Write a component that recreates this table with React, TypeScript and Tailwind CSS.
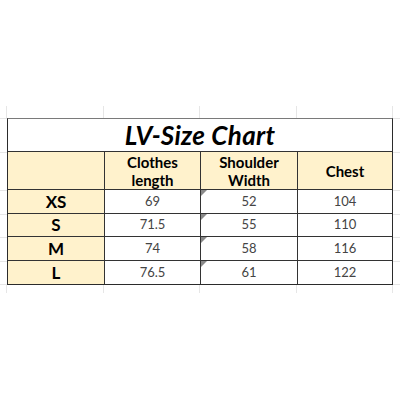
import React from "react";

const rows = [
  { s: "XS", a: "69", b: "52", c: "104", h: "h-[24px]" },
  { s: "S", a: "71.5", b: "55", c: "110", h: "h-[23px]" },
  { s: "M", a: "74", b: "58", c: "116", h: "h-[24px]" },
  { s: "L", a: "76.5", b: "61", c: "122", h: "h-[23px]" },
];

function Tri() {
  return (
    <svg className="absolute left-0 top-0" width="6" height="6" viewBox="0 0 6 6">
      <polygon points="0,0 6,0 0,6" fill="#8a8a8a" />
    </svg>
  );
}

export default function App() {
  return (
    <div className="w-[400px] h-[400px] bg-white flex flex-col" style={{ fontFamily: "Lato, 'Open Sans', sans-serif" }}>
      <div className="h-[106px]" />
      {/* faint grid above */}
      <div className="h-[12px] flex">
        <div className="w-[7px] border-r border-[#e6e6e6]" />
        <div className="w-[97px] border-r border-[#e6e6e6]" />
        <div className="w-[96px] border-r border-[#e6e6e6]" />
        <div className="w-[97px] border-r border-[#e6e6e6]" />
        <div className="w-[96px] border-r border-[#e6e6e6]" />
      </div>
      <div className="flex">
        <div className="w-[7px] flex flex-col">
          <div className="h-[34px] border-t border-[#e6e6e6]" />
          <div className="h-[38px] border-t border-[#e6e6e6]" />
          <div className="h-[24px] border-t border-[#e6e6e6]" />
          <div className="h-[23px] border-t border-[#e6e6e6]" />
          <div className="h-[24px] border-t border-[#e6e6e6]" />
          <div className="h-[24px] border-t border-b border-[#e6e6e6]" />
        </div>
        <div className="w-[386px] border border-[#2b2b2b] border-t-[#7a7a7a]">
          <div className="h-[33px] border-b border-[#333] flex items-center justify-center">
            <span className="text-[26px] font-bold italic text-black leading-none tracking-[0.3px]">LV-Size Chart</span>
          </div>
          <div className="flex h-[38px] bg-[#fff2cc] border-b border-[#333] text-[15px] font-bold text-black leading-[18px] text-center">
            <div className="w-[97px] border-r border-[#333]" />
            <div className="w-[96px] border-r border-[#333] flex items-center justify-center">Clothes<br />length</div>
            <div className="w-[97px] border-r border-[#333] flex items-center justify-center">Shoulder<br />Width</div>
            <div className="w-[94px] flex items-center justify-center">Chest</div>
          </div>
          {rows.map((r, i) => (
            <div key={r.s} className={`flex ${r.h} ${i < rows.length - 1 ? "border-b border-[#333]" : ""}`}>
              <div className="w-[97px] bg-[#fff2cc] border-r border-[#333] flex items-center justify-center text-[17px] font-bold text-black">{r.s}</div>
              <div className="w-[96px] border-r border-[#333] flex items-center justify-center text-[13px] text-[#444]">{r.a}</div>
              <div className="relative w-[97px] border-r border-[#333] flex items-center justify-center text-[13px] text-[#444]">
                <Tri />
                {r.b}
              </div>
              <div className="w-[94px] flex items-center justify-center text-[13px] text-[#444]">{r.c}</div>
            </div>
          ))}
        </div>
        <div className="w-[7px] flex flex-col">
          <div className="h-[34px] border-t border-[#e6e6e6]" />
          <div className="h-[38px] border-t border-[#e6e6e6]" />
          <div className="h-[24px] border-t border-[#e6e6e6]" />
          <div className="h-[23px] border-t border-[#e6e6e6]" />
          <div className="h-[24px] border-t border-[#e6e6e6]" />
          <div className="h-[24px] border-t border-b border-[#e6e6e6]" />
        </div>
      </div>
      {/* faint grid below */}
      <div className="h-[8px] flex">
        <div className="w-[7px] border-r border-[#e6e6e6]" />
        <div className="w-[97px] border-r border-[#e6e6e6]" />
        <div className="w-[96px] border-r border-[#e6e6e6]" />
        <div className="w-[97px] border-r border-[#e6e6e6]" />
        <div className="w-[96px] border-r border-[#e6e6e6]" />
      </div>
    </div>
  );
}
